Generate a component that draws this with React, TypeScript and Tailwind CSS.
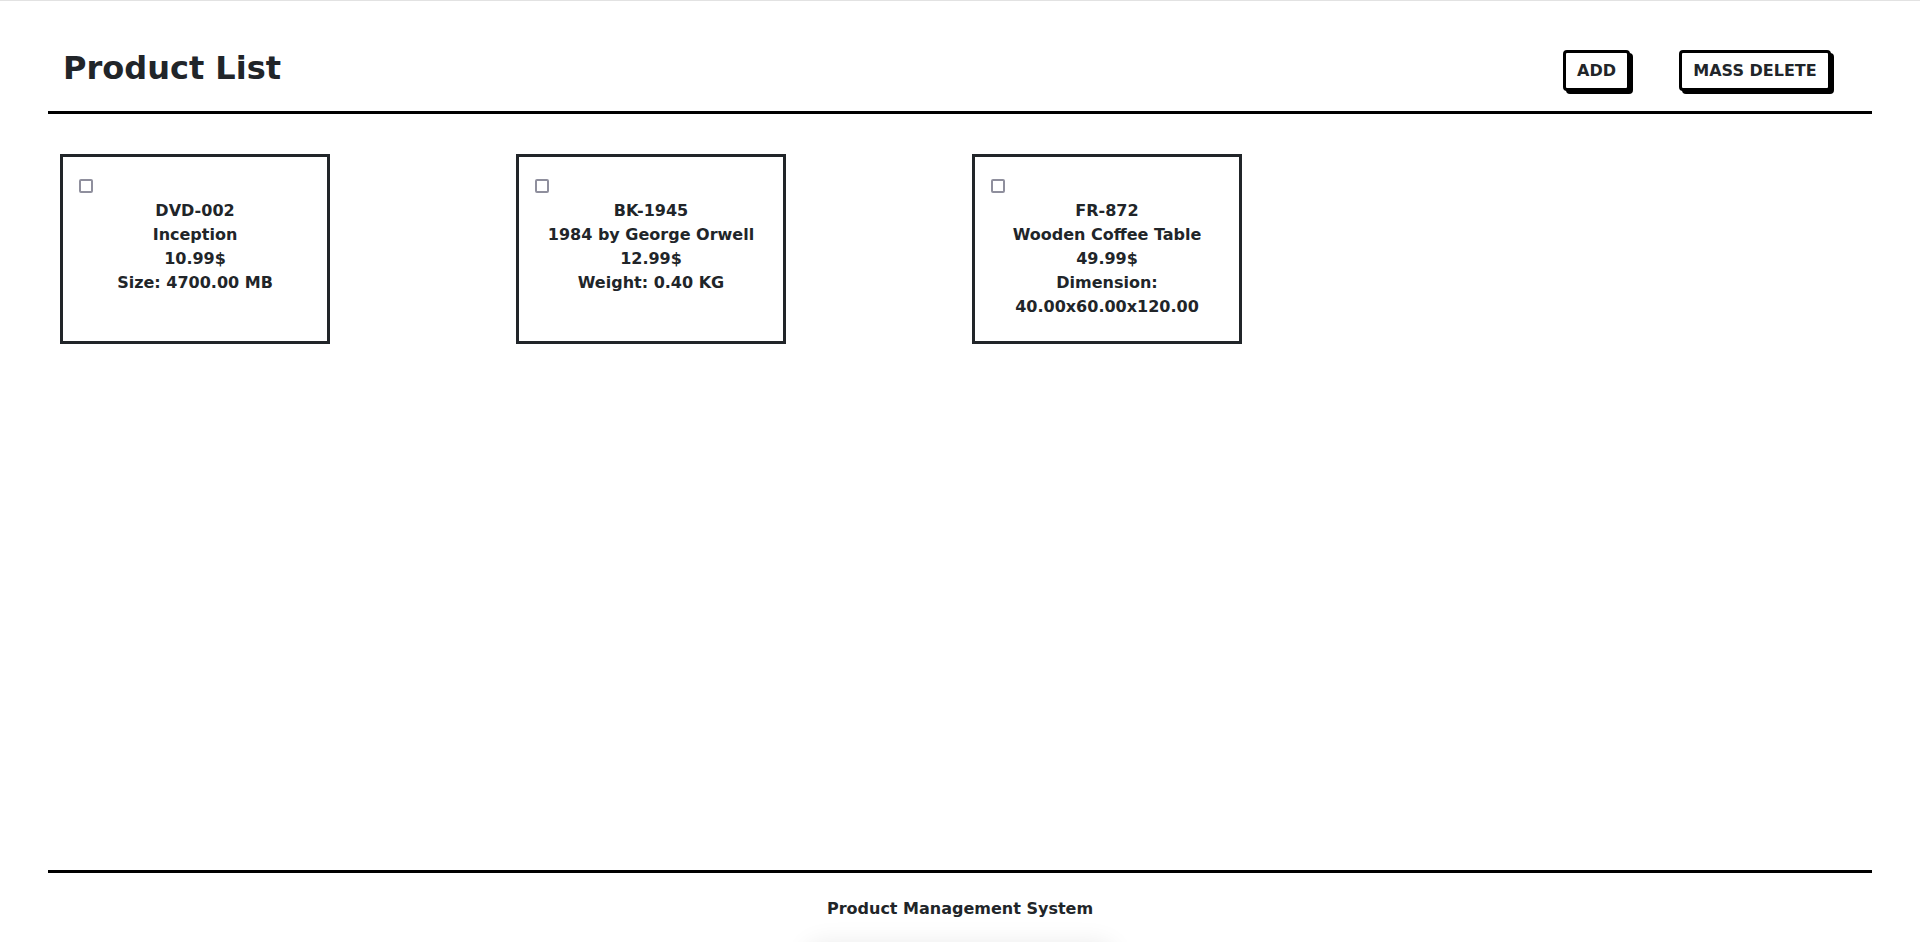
const products = [
  { sku: 'DVD-002', name: 'Inception', price: '10.99$', attr: ['Size: 4700.00 MB'] },
  { sku: 'BK-1945', name: '1984 by George Orwell', price: '12.99$', attr: ['Weight: 0.40 KG'] },
  { sku: 'FR-872', name: 'Wooden Coffee Table', price: '49.99$', attr: ['Dimension:', '40.00x60.00x120.00'] },
];

function ProductCard({ product }: { product: (typeof products)[number] }) {
  return (
    <div className="h-[190px] w-[270px] border-[3px] border-[#212529] bg-white px-4 pt-[22px]">
      <div className="ml-0 h-[14px] w-[14px] rounded-[2px] border-2 border-[#8f8f9d] bg-white" />
      <div className="mt-[6px] text-center text-[16px] font-bold leading-6 text-[#212529]">
        <div>{product.sku}</div>
        <div>{product.name}</div>
        <div>{product.price}</div>
        {product.attr.map((line) => (
          <div key={line}>{line}</div>
        ))}
      </div>
    </div>
  );
}

export default function App() {
  return (
    <div
      className="flex h-screen flex-col overflow-hidden border-t border-[#e2e2e2] bg-white text-[#212529]"
      style={{ fontFamily: '"DejaVu Sans", Verdana, sans-serif' }}
    >
      <div className="mx-12 flex flex-1 flex-col">
        <header className="flex items-start justify-between border-b-[3px] border-black pb-[20px] pl-[15px] pr-[41px] pt-[48px]">
          <h1 className="text-[32px] font-bold leading-[1.2]">Product List</h1>
          <div className="mt-[1px] flex gap-[49px]">
            <button
              type="button"
              className="flex h-[41px] w-[67px] items-center justify-center rounded-[4px] border-[3px] border-black bg-white text-[16px] font-bold text-[#212529] shadow-[3px_3px_0_#000]"
            >
              ADD
            </button>
            <button
              type="button"
              className="flex h-[41px] w-[152px] items-center justify-center rounded-[4px] border-[3px] border-black bg-white text-[16px] font-bold text-[#212529] shadow-[3px_3px_0_#000]"
            >
              MASS DELETE
            </button>
          </div>
        </header>

        <main className="mt-10 grid flex-1 grid-cols-4 content-start">
          {products.map((p) => (
            <div key={p.sku} className="px-3">
              <ProductCard product={p} />
            </div>
          ))}
        </main>

        <footer className="relative border-t-[3px] border-black pb-[21px] pt-6 text-center text-[16px] font-bold leading-6">
          Product Management System
          <div className="absolute left-1/2 top-full h-10 w-[312px] -translate-x-1/2 rounded-full bg-white shadow-[0_0_24px_rgba(0,0,0,0.08)]" />
        </footer>
      </div>
    </div>
  );
}
